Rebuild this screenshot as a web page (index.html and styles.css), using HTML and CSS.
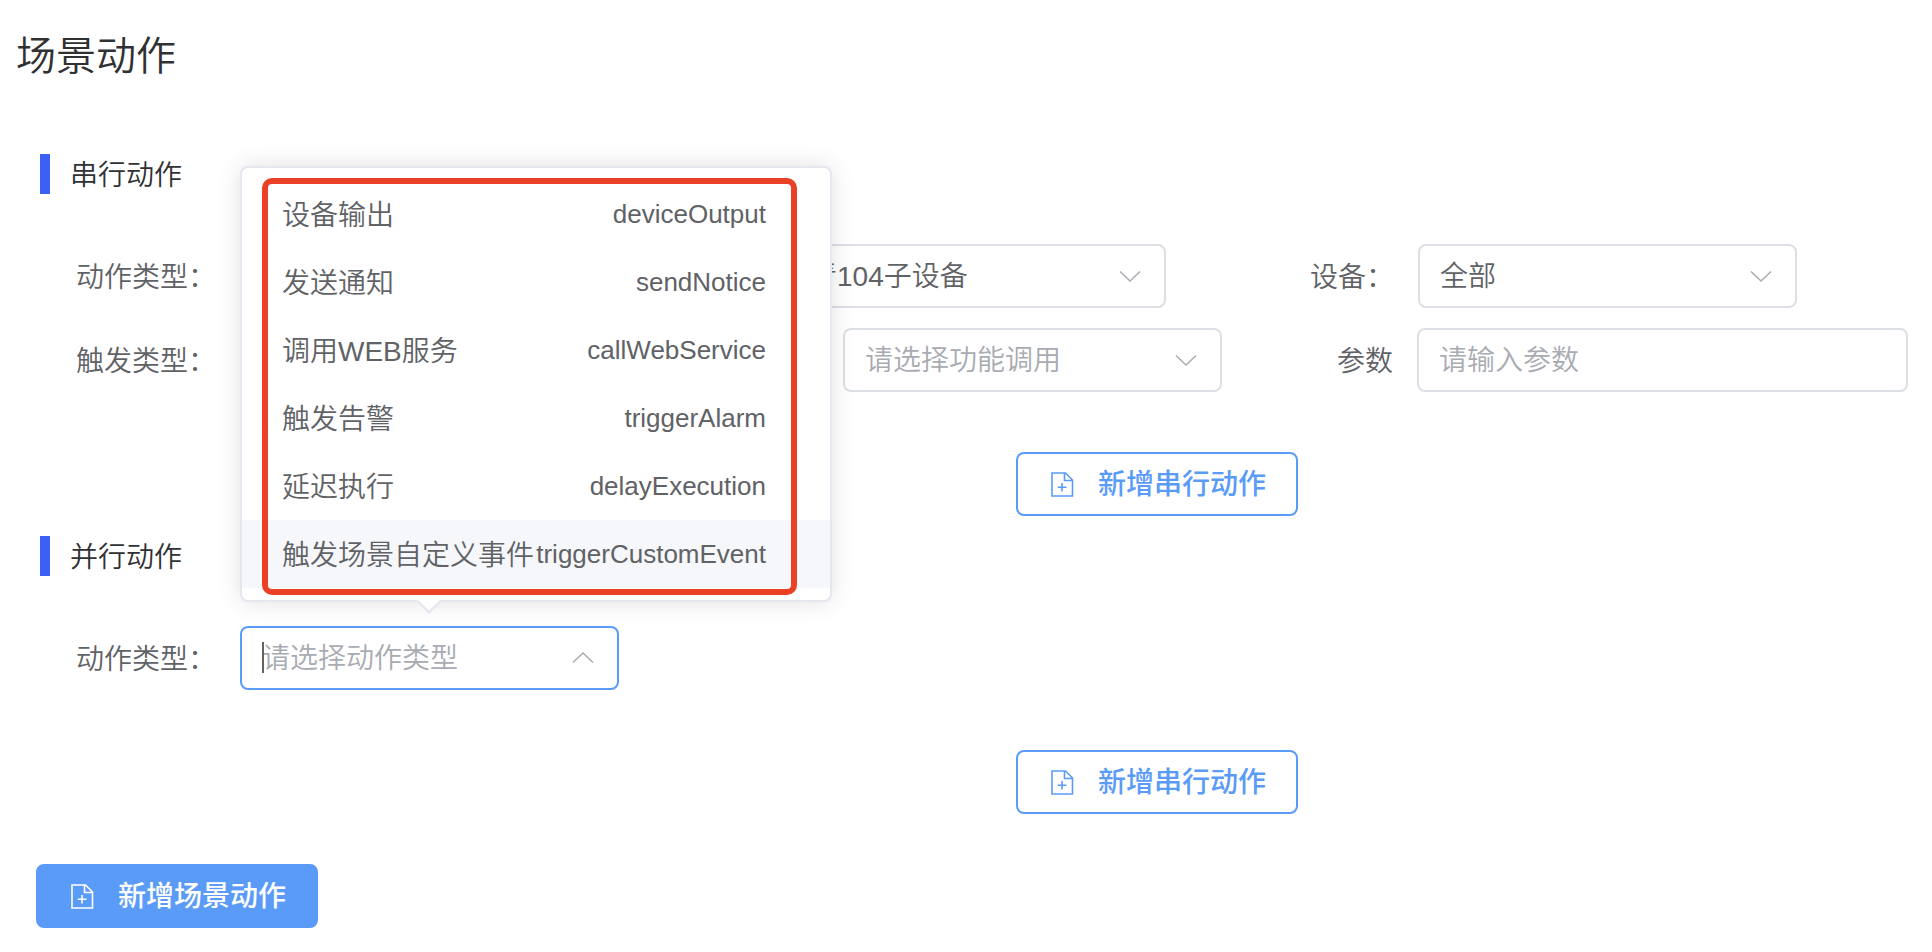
FILE: index.html
```html
<!DOCTYPE html>
<html lang="zh-CN">
<head>
<meta charset="utf-8">
<title>场景动作</title>
<link rel="stylesheet" href="styles.css">
</head>
<body>
<svg class="sprite" aria-hidden="true">
  <symbol id="chevron" viewBox="0 0 24 24"><path d="M2 7.500 12 17 22 7.500" fill="none" stroke="currentColor" stroke-width="1.500"/></symbol>
  <symbol id="doc-add" viewBox="0 0 24 26"><path d="M2 1H15.500L22.500 8V24H2ZM14.500 1V8.500H22.500M12 11V19.500M7.700 15.200H16.500" fill="none" stroke="currentColor" stroke-width="1.600"/></symbol>
</svg>
<main class="page">
  <h1 class="title">场景动作</h1>

  <section class="group">
    <h2 class="group-title">串行动作</h2>
    <div class="row">
      <label class="label" for="product">动作类型：</label>
      <div class="select product">
        <select id="product"><option>青104子设备</option></select>
        <svg class="chevron"><use href="#chevron"/></svg>
      </div>
      <label class="label device-label" for="device">设备：</label>
      <div class="select">
        <select id="device"><option>全部</option></select>
        <svg class="chevron"><use href="#chevron"/></svg>
      </div>
    </div>
    <div class="row">
      <label class="label" for="func">触发类型：</label>
      <div class="select func">
        <select id="func" class="empty"><option>请选择功能调用</option></select>
        <svg class="chevron"><use href="#chevron"/></svg>
      </div>
      <label class="label param-label" for="param">参数</label>
      <input id="param" class="input" type="text" placeholder="请输入参数">
    </div>
    <div class="actions">
      <button class="button" type="button"><svg class="icon"><use href="#doc-add"/></svg>新增串行动作</button>
    </div>
  </section>

  <section class="group">
    <h2 class="group-title">并行动作</h2>
    <div class="row">
      <label class="label" for="action">动作类型：</label>
      <div class="select open">
        <input id="action" class="input" type="text" role="combobox" aria-expanded="true" aria-controls="menu" placeholder="请选择动作类型">
        <span class="caret"></span>
        <svg class="chevron up"><use href="#chevron"/></svg>
        <div class="popper">
          <ul class="menu" id="menu" role="listbox">
            <li class="option" role="option"><span class="name">设备输出</span><span class="code">deviceOutput</span></li>
            <li class="option" role="option"><span class="name">发送通知</span><span class="code">sendNotice</span></li>
            <li class="option" role="option"><span class="name">调用WEB服务</span><span class="code">callWebService</span></li>
            <li class="option" role="option"><span class="name">触发告警</span><span class="code">triggerAlarm</span></li>
            <li class="option" role="option"><span class="name">延迟执行</span><span class="code">delayExecution</span></li>
            <li class="option active" role="option"><span class="name">触发场景自定义事件</span><span class="code">triggerCustomEvent</span></li>
          </ul>
          <span class="arrow"></span>
          <span class="highlight"></span>
        </div>
      </div>
    </div>
    <div class="actions">
      <button class="button" type="button"><svg class="icon"><use href="#doc-add"/></svg>新增串行动作</button>
    </div>
  </section>

  <button class="button primary" type="button"><svg class="icon"><use href="#doc-add"/></svg>新增场景动作</button>
</main>
</body>
</html>
```
FILE: styles.css
```css
* { box-sizing: border-box; }

body {
  margin: 0;
  background: #fff;
  color: #606266;
  font-family: "Liberation Sans", "Noto Sans CJK SC", sans-serif;
  font-size: 28px;
  font-weight: 350;
  line-height: 40px;
}

.sprite { display: none; }

.page { padding: 24px 24px 24px 16px; }

.title {
  margin: 0 0 66px;
  color: #303133;
  font-size: 40px;
  font-weight: 350;
  line-height: 64px;
}

.group { margin: 0 0 20px 24px; }

.group-title {
  margin: 0 0 50px;
  padding: 4px 0 0 20px;
  border-left: 10px solid #3a60f5;
  color: #303133;
  font-size: 28px;
  font-weight: 350;
  line-height: 36px;
}

.row {
  display: flex;
  align-items: center;
  margin-bottom: 20px;
  padding-left: 36px;
}

.label { flex: none; width: 164px; padding-top: 4px; }
.device-label { width: 108px; margin-left: 144px; }
.param-label { width: 80px; margin-left: 115px; }

.select {
  position: relative;
  flex: none;
  width: 379px;
}

.product { margin-left: 547px; }
.func { margin-left: 603px; }

select,
.input {
  display: block;
  width: 100%;
  height: 64px;
  margin: 0;
  padding: 2px 20px 0;
  border: 2px solid #dcdfe6;
  border-radius: 8px;
  outline: none;
  appearance: none;
  background: #fff;
  color: #606266;
  font: inherit;
}

.input { flex: 1; min-width: 0; }
.input::placeholder { color: #a8abb2; opacity: 1; }
select.empty { color: #a8abb2; }

.open .input { border-color: #5b9bf8; }

.caret {
  position: absolute;
  top: 16px;
  left: 22px;
  width: 2px;
  height: 31px;
  background: #606266;
}

.chevron {
  position: absolute;
  top: 20px;
  right: 24px;
  width: 24px;
  height: 24px;
  color: #a8abb2;
  pointer-events: none;
}

.up { transform: rotate(180deg); }

.popper {
  position: absolute;
  z-index: 2;
  bottom: 88px;
  left: 0;
  min-width: 592px;
  border: 2px solid #e4e7ed;
  border-radius: 8px;
  background: #fff;
  box-shadow: 0 0 24px rgba(0, 0, 0, 0.12);
}

.menu {
  margin: 0;
  padding: 12px 0;
  list-style: none;
}

.option {
  display: flex;
  justify-content: space-between;
  padding: 0 64px 0 40px;
  line-height: 68px;
  white-space: nowrap;
}

.name { padding-top: 4px; line-height: 64px; }
.active { background: #f5f7fa; }
.code { font-size: 26px; }

.arrow {
  position: absolute;
  bottom: -10px;
  left: 178px;
  width: 18px;
  height: 18px;
  border: solid #e4e7ed;
  border-width: 0 2px 2px 0;
  background: #fff;
  transform: rotate(45deg);
}

.highlight {
  position: absolute;
  top: 10px;
  right: 33px;
  bottom: 5px;
  left: 20px;
  border: 6px solid #ea4025;
  border-radius: 10px;
}

.actions {
  display: flex;
  justify-content: center;
  margin-top: 60px;
  padding-left: 366px;
}

.button {
  display: flex;
  align-items: center;
  justify-content: center;
  gap: 24px;
  height: 64px;
  padding: 2px 30px 0 32px;
  border: 2px solid #5b9bf8;
  border-radius: 8px;
  background: #fff;
  color: #5b9bf8;
  font: inherit;
  font-weight: 500;
}

.icon { width: 24px; height: 26px; }

.primary {
  margin: 50px 0 0 20px;
  background: #5b9bf8;
  color: #fff;
}
```
